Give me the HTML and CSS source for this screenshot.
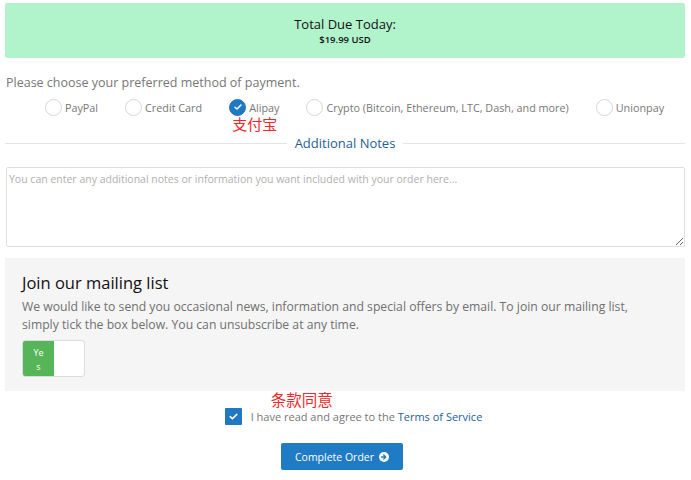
FILE: index.html
```html
<!DOCTYPE html>
<html lang="en">
<head>
<meta charset="utf-8">
<title>Checkout</title>
<link rel="stylesheet" href="styles.css">
</head>
<body>
<div class="page">
  <div class="total">
    <div class="total-label">Total Due Today:</div>
    <div class="total-amount">$19.99 USD</div>
  </div>

  <p class="choose">Please choose your preferred method of payment.</p>
  <div class="methods">
    <label class="method"><span class="radio"></span><span>PayPal</span></label>
    <label class="method"><span class="radio"></span><span>Credit Card</span></label>
    <label class="method alipay"><span class="radio checked"><svg viewBox="0 0 16 16" width="10" height="10"><path d="M3.2 8.3 6.4 11.3 12.8 4.8" fill="none" stroke="#fff" stroke-width="2.4" stroke-linecap="round" stroke-linejoin="round"/></svg></span><span>Alipay</span><span class="note-cn">支付宝</span></label>
    <label class="method"><span class="radio"></span><span>Crypto (Bitcoin, Ethereum, LTC, Dash, and more)</span></label>
    <label class="method"><span class="radio"></span><span>Unionpay</span></label>
  </div>

  <div class="divider"><span class="divider-line"></span><span class="divider-text">Additional Notes</span><span class="divider-line"></span></div>

  <textarea class="notes" placeholder="You can enter any additional notes or information you want included with your order here..."></textarea>

  <div class="mailing">
    <h2 class="mailing-title">Join our mailing list</h2>
    <p class="mailing-text">We would like to send you occasional news, information and special offers by email. To join our mailing list, simply tick the box below. You can unsubscribe at any time.</p>
    <div class="toggle"><span class="toggle-on">Yes</span><span class="toggle-off"></span></div>
  </div>

  <div class="terms">
    <div class="terms-row">
      <span class="terms-cn">条款同意</span>
      <span class="checkbox"><svg viewBox="0 0 16 16" width="11" height="11"><path d="M3.2 8.3 6.4 11.3 12.8 4.8" fill="none" stroke="#fff" stroke-width="2.4" stroke-linecap="round" stroke-linejoin="round"/></svg></span>
      <span class="terms-text">I have read and agree to the <a class="terms-link" href="#">Terms of Service</a></span>
    </div>
    <button class="complete" type="button">Complete Order <svg viewBox="0 0 16 16" width="10" height="10"><circle cx="8" cy="8" r="8" fill="#fff"/><path d="M4 8h6.5M7.6 4.9 10.7 8l-3.1 3.1" fill="none" stroke="#1f7bc4" stroke-width="2.2" stroke-linecap="round" stroke-linejoin="round"/></svg></button>
  </div>
</div>
</body>
</html>
```

FILE: styles.css
```css
* { box-sizing: border-box; }
html, body { margin: 0; padding: 0; background: #fff; }
body {
  font-family: "Open Sans", "Noto Sans CJK SC", sans-serif;
  color: #333;
}
.page {
  padding: 3px 6px 0 5px;
  width: 691px;
}
.total {
  background: #b1f3cb;
  height: 55px;
  border-radius: 2px;
  display: flex;
  flex-direction: column;
  align-items: center;
  justify-content: center;
  color: #111;
}
.total-label { font-size: 13px; line-height: 16px; }
.total-amount { font-size: 9.5px; font-weight: 600; line-height: 13px; margin-top: 1px; }

.choose {
  margin: 17px 0 0 1px;
  font-size: 12.5px;
  line-height: 16px;
  color: #777;
}
.methods {
  display: flex;
  justify-content: center;
  gap: 27px;
  margin-top: 7px;
  padding-left: 19px;
  font-size: 10.8px;
  color: #777;
}
.method {
  position: relative;
  display: flex;
  align-items: center;
  gap: 3px;
  height: 18px;
}
.radio {
  width: 17px;
  height: 17px;
  border: 1px solid #d6d6d6;
  border-radius: 50%;
  background: #fff;
  display: flex;
  align-items: center;
  justify-content: center;
}
.radio.checked {
  background: #1f78c1;
  border-color: #1f78c1;
}
.note-cn {
  position: absolute;
  left: 3px;
  top: 15px;
  font-size: 15px;
  color: #f0262b;
  white-space: nowrap;
}
.divider {
  display: flex;
  align-items: center;
  gap: 8px;
  margin-top: 18px;
}
.divider-line { flex: 1; height: 1px; background: #e4e4e4; }
.divider-text { font-size: 13px; color: #1d5f91; line-height: 18px; }

.notes {
  display: block;
  width: 679px;
  height: 80px;
  margin: 15px 0 0 1px;
  border: 1px solid #dedede;
  border-radius: 2px;
  padding: 4px 2px;
  font-family: inherit;
  font-size: 10.5px;
  resize: vertical;
}
.notes::placeholder { color: #b0b0b0; }

.mailing {
  margin-top: 11px;
  background: #f5f5f5;
  padding: 14px 30px 14px 17px;
  height: 133px;
}
.mailing-title {
  margin: 0;
  font-size: 16.5px;
  font-weight: 400;
  color: #111;
  line-height: 22px;
}
.mailing-text {
  margin: 4px 0 0;
  font-size: 12.2px;
  line-height: 18px;
  color: #707070;
}
.toggle {
  display: flex;
  width: 63px;
  height: 37px;
  margin-top: 6px;
  border: 1px solid #dcdcdc;
  border-radius: 3px;
  overflow: hidden;
  background: #fff;
}
.toggle-on {
  width: 31px;
  background: #55b558;
  color: #fff;
  font-size: 9px;
  line-height: 14px;
  padding: 5px 9px 0 9px;
  word-break: break-all;
  text-align: center;
}
.toggle-off { flex: 1; }

.terms {
  display: flex;
  flex-direction: column;
  align-items: center;
}
.terms-row {
  position: relative;
  display: flex;
  align-items: center;
  gap: 9px;
  margin-top: 17px;
  margin-left: 17px;
}
.terms-cn {
  position: absolute;
  left: 46px;
  top: -20px;
  font-size: 15.5px;
  color: #f0262b;
  white-space: nowrap;
}
.checkbox {
  width: 17px;
  height: 17px;
  background: #1f78c1;
  border-radius: 1px;
  display: flex;
  align-items: center;
  justify-content: center;
}
.terms-text { font-size: 11px; color: #777; }
.terms-link { color: #1d5f91; text-decoration: none; }
.complete {
  margin-top: 18px;
  margin-left: -6px;
  width: 122px;
  height: 27px;
  border: 0;
  border-radius: 2px;
  background: #1f7bc4;
  color: #fff;
  font-family: inherit;
  font-size: 10.5px;
  display: flex;
  align-items: center;
  justify-content: center;
  gap: 5px;
  padding: 0;
}
```
